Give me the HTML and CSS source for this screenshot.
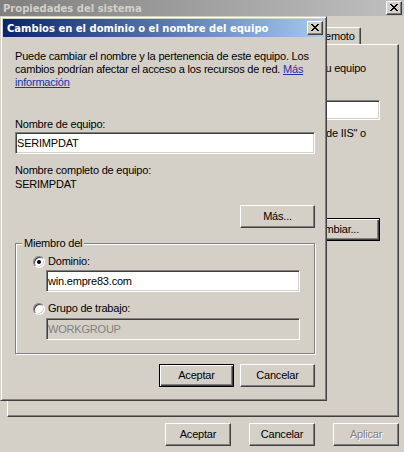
FILE: index.html
```html
<!DOCTYPE html>
<html lang="es">
<head>
<meta charset="utf-8">
<title>Propiedades del sistema</title>
<link rel="stylesheet" href="styles.css">
</head>
<body>
<div class="win">
  <div class="caption inactive">
    <span class="cap-text">Propiedades del sistema</span>
    <span class="cap-btn"><svg viewBox="0 0 8 7" width="8" height="7" shape-rendering="crispEdges"><path d="M0 0h2v1h-2zM6 0h2v1h-2zM1 1h2v1h-2zM5 1h2v1h-2zM2 2h4v1h-4zM3 3h2v1h-2zM2 4h4v1h-4zM1 5h2v1h-2zM5 5h2v1h-2zM0 6h2v1h-2zM6 6h2v1h-2z" fill="#000"/></svg></span>
  </div>
  <div class="tabs">
    <div class="tab w-rem">Remoto</div>
  </div>
  <div class="panel">
    <div class="bg-line r">Windows usa la siguiente información para identificar su equipo</div>
    <div class="desc-row"><span class="edit bg-edit"></span></div>
    <div class="bg-line r second">Por ejemplo: &quot;Servidor de producción de IIS&quot; o</div>
    <button class="btn default cambiar">Cambiar...</button>
  </div>
  <div class="win-buttons">
    <button class="btn small">Aceptar</button>
    <button class="btn small">Cancelar</button>
    <button class="btn small disabled">Aplicar</button>
  </div>

  <div class="dialog">
    <div class="dlg-title">
      <span class="cap-text">Cambios en el dominio o el nombre del equipo</span>
      <span class="cap-btn"><svg viewBox="0 0 8 7" width="8" height="7" shape-rendering="crispEdges"><path d="M0 0h2v1h-2zM6 0h2v1h-2zM1 1h2v1h-2zM5 1h2v1h-2zM2 2h4v1h-4zM3 3h2v1h-2zM2 4h4v1h-4zM1 5h2v1h-2zM5 5h2v1h-2zM0 6h2v1h-2zM6 6h2v1h-2z" fill="#000"/></svg></span>
    </div>
    <div class="dlg-body">
      <p class="intro">Puede cambiar el nombre y la pertenencia de este equipo. Los<br>cambios podrían afectar el acceso a los recursos de red. <a class="link" href="#">Más</a><br><a class="link" href="#">información</a></p>
      <div class="field-label">Nombre de equipo:</div>
      <input class="edit full" type="text" value="SERIMPDAT">
      <div class="full-label">Nombre completo de equipo:</div>
      <div class="full-value">SERIMPDAT</div>
      <div class="more-row"><button class="btn">Más...</button></div>
      <fieldset class="group">
        <legend>Miembro del</legend>
        <div class="radio-row first"><span class="radio on"></span><span>Dominio:</span></div>
        <input class="edit indent" type="text" value="win.empre83.com">
        <div class="radio-row second"><span class="radio"></span><span>Grupo de trabajo:</span></div>
        <input class="edit indent dis" type="text" value="WORKGROUP" disabled>
      </fieldset>
      <div class="dlg-buttons">
        <button class="btn default">Aceptar</button>
        <button class="btn">Cancelar</button>
      </div>
    </div>
  </div>
</div>
</body>
</html>
```
FILE: styles.css
```css
* { box-sizing: border-box; }
html, body { margin: 0; padding: 0; }
body {
  width: 404px;
  height: 452px;
  overflow: hidden;
  background: #d4d0c8;
  font-family: "Liberation Sans", Arial, sans-serif;
  font-size: 11px;
  line-height: 13px;
  letter-spacing: -0.2px;
  color: #000;
}
.win {
  position: relative;
  width: 404px;
  height: 452px;
  background: #d4d0c8;
  overflow: hidden;
}
.caption {
  height: 16px;
  display: flex;
  align-items: center;
  justify-content: space-between;
  padding: 0 2px 0 3px;
  background: linear-gradient(to right, #808080, #c0c0c0);
}
.cap-text {
  font-family: "DejaVu Sans", sans-serif;
  font-weight: bold;
  font-size: 10px;
  letter-spacing: 0;
  color: #d4d0c8;
  white-space: nowrap;
}
.cap-btn {
  width: 16px;
  height: 14px;
  flex: none;
  display: flex;
  align-items: center;
  justify-content: center;
  background: #d4d0c8;
  border: 1px solid;
  border-color: #fff #404040 #404040 #fff;
  box-shadow: inset -1px -1px 0 #808080;
}
.cap-btn svg { display: block; margin: 0 1px 1px 0; }

.tabs {
  display: flex;
  align-items: flex-end;
  height: 17px;
  margin-top: 11px;
  padding-left: 311px;
}
.tab {
  height: 17px;
  display: flex;
  align-items: center;
  justify-content: center;
  white-space: nowrap;
  overflow: hidden;
  border: 1px solid;
  border-bottom: none;
  border-color: #fff #404040 transparent #fff;
  box-shadow: inset -1px 0 0 #808080;
  border-radius: 2px 2px 0 0;
}
.w-rem { width: 50px; }

.panel {
  margin-left: 7px;
  width: 392px;
  height: 373px;
  border: 1px solid;
  border-color: #fff #404040 #404040 #fff;
  box-shadow: inset -1px -1px 0 #808080;
  display: flex;
  flex-direction: column;
  align-items: flex-end;
  padding: 17px 18px 0 10px;
  overflow: hidden;
}
.bg-line { white-space: nowrap; }
.bg-line.r { margin-right: 14px; }
.bg-line.second { margin-top: 7px; }
.desc-row {
  align-self: stretch;
  display: flex;
  align-items: center;
  justify-content: flex-end;
  margin-top: 25px;
}
.edit {
  display: block;
  height: 22px;
  border: 1px solid;
  border-color: #808080 #fff #fff #808080;
  box-shadow: inset 1px 1px 0 #404040, inset -1px -1px 0 #d4d0c8;
  background: #fff;
  font: inherit;
  letter-spacing: inherit;
  color: #000;
  padding: 0 0 0 1px;
  margin: 0;
  outline: none;
}
.bg-edit { width: 250px; height: 20px; }

.btn {
  width: 75px;
  height: 23px;
  padding: 0;
  margin: 0;
  font: inherit;
  letter-spacing: inherit;
  color: #000;
  background: #d4d0c8;
  border: 1px solid;
  border-color: #fff #404040 #404040 #fff;
  border-radius: 0;
  box-shadow: inset -1px -1px 0 #808080;
}
.btn.default {
  border-color: #000;
  box-shadow: inset 1px 1px 0 #fff, inset -1px -1px 0 #404040, inset -2px -2px 0 #808080;
}
.btn.small { width: 66px; }
.btn.disabled { color: #808080; text-shadow: 1px 1px 0 #fff; }
.btn.cambiar { margin-top: 78px; width: 90px; }

.win-buttons {
  display: flex;
  justify-content: flex-end;
  gap: 18px;
  margin-top: 6px;
  padding-right: 5px;
}

.dialog {
  position: absolute;
  left: 0;
  top: 16px;
  width: 327px;
  height: 385px;
  border: 1px solid;
  border-color: #d4d0c8 #404040 #404040 #d4d0c8;
  box-shadow: inset 1px 1px 0 #fff, inset -1px -1px 0 #808080;
  padding: 2px;
  background: #d4d0c8;
}
.dlg-title {
  height: 18px;
  display: flex;
  align-items: center;
  justify-content: space-between;
  padding: 0 1px 0 4px;
  background: linear-gradient(to right, #0a246a, #a6caf0);
}
.dlg-title .cap-text { color: #fff; }
.dlg-body { padding: 13px 9px 0 12px; }
.intro { margin: 0; white-space: nowrap; }
.link { color: #2030b0; text-decoration: underline; }
.field-label { margin-top: 29px; }
.edit.full { width: 300px; margin-top: 1px; }
.full-label { margin-top: 10px; }
.full-value { margin-top: 1px; }
.more-row { display: flex; justify-content: flex-end; margin-top: 14px; }

.group {
  margin: 9px 0 0;
  padding: 0 0 13px;
  width: 300px;
  min-width: 0;
  border: 1px solid #808080;
  box-shadow: inset 1px 1px 0 #fff, 1px 1px 0 #fff;
}
.group legend {
  margin-left: 6px;
  padding: 0 2px;
  line-height: 13px;
  background: #d4d0c8;
}
.radio-row {
  display: flex;
  align-items: center;
  height: 13px;
  padding-left: 17px;
}
.radio-row.first { margin-top: 5px; }
.radio-row.second { margin-top: 10px; }
.radio {
  position: relative;
  flex: none;
  width: 12px;
  height: 12px;
  margin-right: 3px;
  border-radius: 50%;
  border: 1px solid;
  border-color: #808080 #fff #fff #808080;
  box-shadow: inset 1px 1px 0 #404040, inset -1px -1px 0 #d4d0c8;
  background: #fff;
}
.radio.on::after {
  content: "";
  position: absolute;
  left: 3px;
  top: 3px;
  width: 4px;
  height: 4px;
  border-radius: 50%;
  background: #000;
}
.edit.indent { width: 254px; margin-left: 30px; margin-top: 2px; }
.edit.dis { margin-top: 3px; background: #d4d0c8; color: #808080; -webkit-text-fill-color: #808080; opacity: 1; }
.dlg-buttons { display: flex; justify-content: flex-end; gap: 6px; margin-top: 10px; }
```
